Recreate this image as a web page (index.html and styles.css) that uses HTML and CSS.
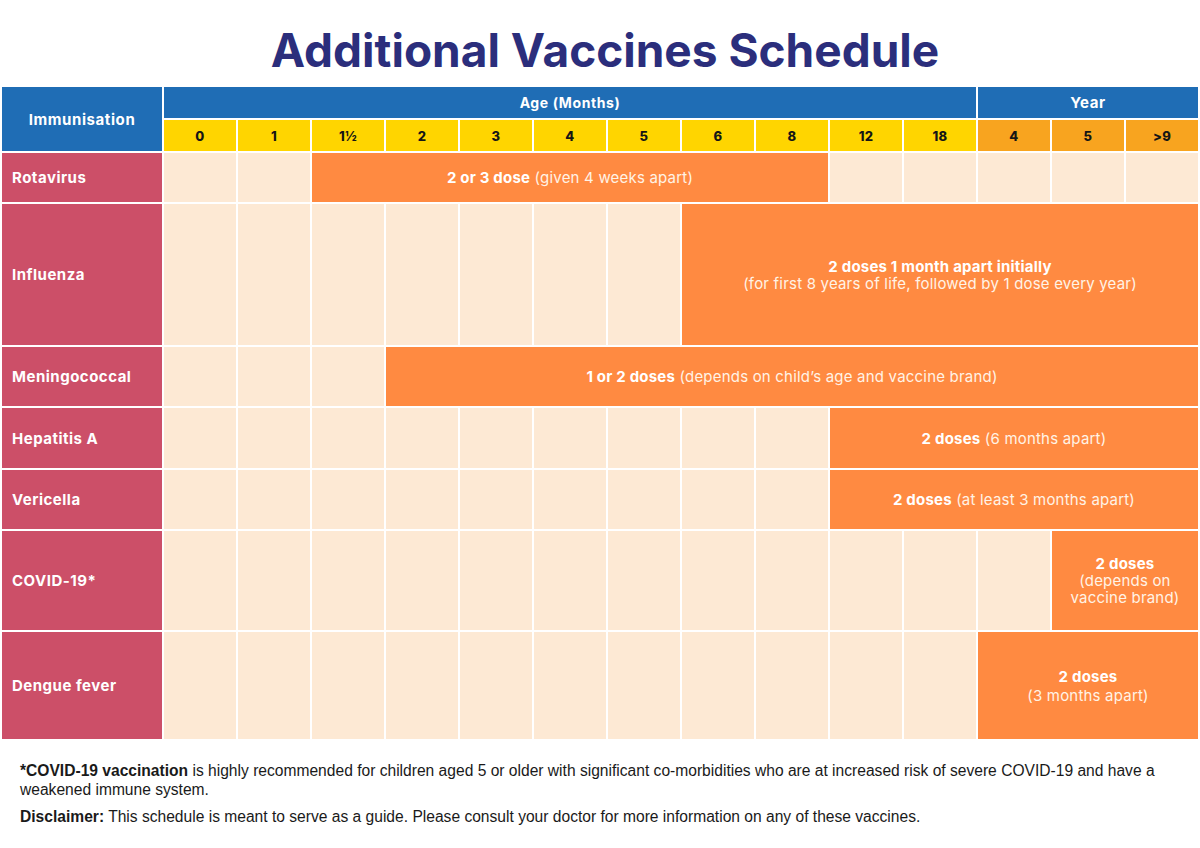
FILE: index.html
```html
<!DOCTYPE html>
<html lang="en">
<head>
<meta charset="utf-8">
<title>Additional Vaccines Schedule</title>
<link rel="stylesheet" href="styles.css">
</head>
<body>
<h1 class="title">Additional Vaccines Schedule</h1>
<div class="schedule">
  <div class="hd-label">Immunisation</div>
  <div class="hd-group hd-age">Age (Months)</div>
  <div class="hd-group hd-year">Year</div>
  <div class="hd-num">0</div>
  <div class="hd-num">1</div>
  <div class="hd-num">1½</div>
  <div class="hd-num">2</div>
  <div class="hd-num">3</div>
  <div class="hd-num">4</div>
  <div class="hd-num">5</div>
  <div class="hd-num">6</div>
  <div class="hd-num">8</div>
  <div class="hd-num">12</div>
  <div class="hd-num">18</div>
  <div class="hd-num yr">4</div>
  <div class="hd-num yr">5</div>
  <div class="hd-num yr">&gt;9</div>

  <!-- Rotavirus -->
  <div class="label">Rotavirus</div>
  <div class="cell"></div><div class="cell"></div>
  <div class="bar span-7"><span><b>2 or 3 dose</b> (given 4 weeks apart)</span></div>
  <div class="cell"></div><div class="cell"></div><div class="cell"></div><div class="cell"></div><div class="cell"></div>

  <!-- Influenza -->
  <div class="label">Influenza</div>
  <div class="cell"></div><div class="cell"></div><div class="cell"></div><div class="cell"></div><div class="cell"></div><div class="cell"></div><div class="cell"></div>
  <div class="bar span-7"><span><b>2 doses 1 month apart initially</b><br>(for first 8 years of life, followed by 1 dose every year)</span></div>

  <!-- Meningococcal -->
  <div class="label">Meningococcal</div>
  <div class="cell"></div><div class="cell"></div><div class="cell"></div>
  <div class="bar span-11"><span><b>1 or 2 doses</b> (depends on child’s age and vaccine brand)</span></div>

  <!-- Hepatitis A -->
  <div class="label">Hepatitis A</div>
  <div class="cell"></div><div class="cell"></div><div class="cell"></div><div class="cell"></div><div class="cell"></div><div class="cell"></div><div class="cell"></div><div class="cell"></div><div class="cell"></div>
  <div class="bar span-5"><span><b>2 doses</b> (6 months apart)</span></div>

  <!-- Vericella -->
  <div class="label">Vericella</div>
  <div class="cell"></div><div class="cell"></div><div class="cell"></div><div class="cell"></div><div class="cell"></div><div class="cell"></div><div class="cell"></div><div class="cell"></div><div class="cell"></div>
  <div class="bar span-5"><span><b>2 doses</b> (at least 3 months apart)</span></div>

  <!-- COVID-19 -->
  <div class="label">COVID-19*</div>
  <div class="cell"></div><div class="cell"></div><div class="cell"></div><div class="cell"></div><div class="cell"></div><div class="cell"></div><div class="cell"></div><div class="cell"></div><div class="cell"></div><div class="cell"></div><div class="cell"></div><div class="cell"></div>
  <div class="bar span-2"><span><b>2 doses</b><br>(depends on<br>vaccine brand)</span></div>

  <!-- Dengue -->
  <div class="label">Dengue fever</div>
  <div class="cell"></div><div class="cell"></div><div class="cell"></div><div class="cell"></div><div class="cell"></div><div class="cell"></div><div class="cell"></div><div class="cell"></div><div class="cell"></div><div class="cell"></div><div class="cell"></div>
  <div class="bar span-3"><span class="spaced"><b>2 doses</b><span class="sub">(3 months apart)</span></span></div>
</div>
<div class="notes">
  <p><b>*COVID-19 vaccination</b> <span>is highly recommended for children aged 5 or older with significant co-morbidities who are at increased risk of severe COVID-19 and have a</span><br><span>weakened immune system.</span></p>
  <p><b>Disclaimer:</b> <span>This schedule is meant to serve as a guide. Please consult your doctor for more information on any of these vaccines.</span></p>
</div>
</body>
</html>
```

FILE: styles.css
```css
html, body {
  margin: 0;
  padding: 0;
  background: #ffffff;
}

body {
  width: 1200px;
  font-family: Inter, "Noto Sans", sans-serif;
}

.title {
  margin: 0;
  height: 87px;
  box-sizing: border-box;
  padding-top: 27px;
  padding-left: 10px;
  text-align: center;
  font-size: 46px;
  line-height: 1;
  font-weight: 700;
  color: #2b2e7c;
  letter-spacing: 0;
}

.schedule {
  display: grid;
  grid-template-columns: 160px repeat(14, 72px);
  grid-template-rows: 31px 31px 49px 141px 59px 60px 59px 99px 107px;
  column-gap: 2px;
  row-gap: 2px;
  padding-left: 2px;
}

.hd-label {
  grid-row: 1 / 3;
  background: #1f6db5;
  color: #ffffff;
  font-size: 15px;
  letter-spacing: 0.6px;
  font-weight: 700;
  display: flex;
  align-items: center;
  justify-content: center;
}

.hd-group {
  background: #1f6db5;
  color: #ffffff;
  font-size: 14px;
  letter-spacing: 0.6px;
  font-weight: 700;
  display: flex;
  align-items: center;
  justify-content: center;
}

.hd-age {
  grid-column: 2 / 13;
}

.hd-year {
  grid-column: 13 / 16;
  font-size: 15px;
}

.hd-num {
  background: #ffd500;
  color: #151515;
  font-size: 13px;
  letter-spacing: 0.3px;
  font-weight: 800;
  display: flex;
  align-items: center;
  justify-content: center;
}

.hd-num.yr {
  background: #f8a41f;
}

.label {
  background: #cc4f68;
  color: #ffffff;
  font-size: 15px;
  letter-spacing: 0.5px;
  font-weight: 700;
  display: flex;
  align-items: center;
  padding-left: 10px;
}

.cell {
  background: #fde9d4;
}

.bar {
  background: #ff8a41;
  color: #fff3e6;
  font-size: 15px;
  letter-spacing: 0.2px;
  line-height: 17px;
  font-weight: 400;
  display: flex;
  align-items: center;
  justify-content: center;
  text-align: center;
}

.bar b {
  font-weight: 700;
  color: #ffffff;
}

.spaced {
  display: flex;
  flex-direction: column;
  gap: 2px;
}

.span-2 { grid-column: span 2; }
.span-3 { grid-column: span 3; }
.span-5 { grid-column: span 5; }
.span-7 { grid-column: span 7; }
.span-11 { grid-column: span 11; }

.notes {
  padding: 22px 20px 0 20px;
  font-family: "Liberation Sans", Arial, sans-serif;
  font-size: 15.6px;
  line-height: 19px;
  color: #1a1a1a;
}

.notes p {
  margin: 0 0 8px 0;
  white-space: nowrap;
}
```
